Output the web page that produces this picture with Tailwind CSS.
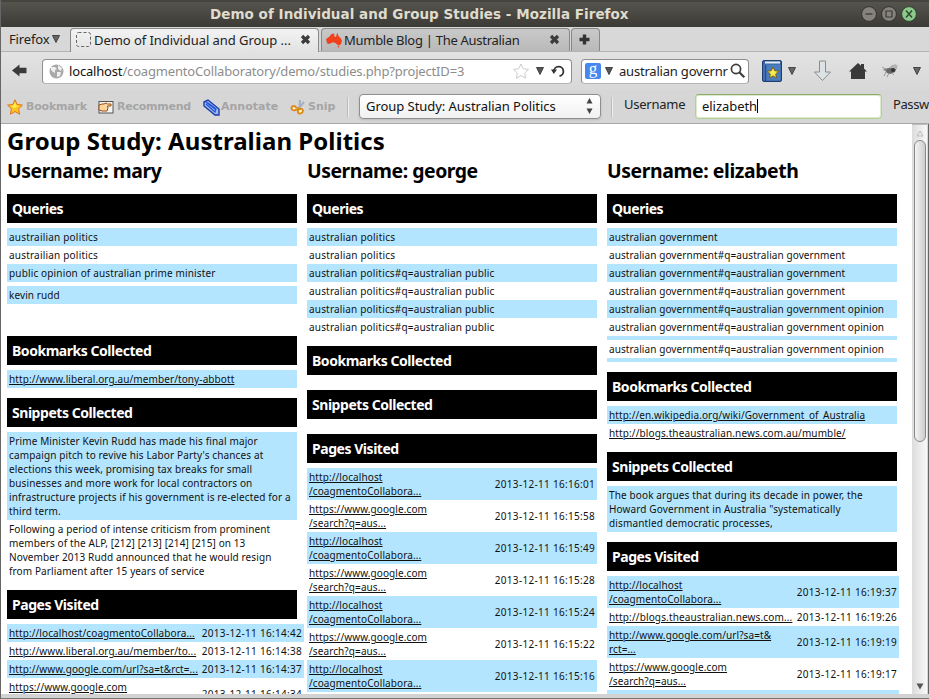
<!DOCTYPE html>
<html lang="en">
<head>
<meta charset="utf-8">
<title>Demo of Individual and Group Studies</title>
<script src="https://cdn.jsdelivr.net/npm/@tailwindcss/browser@4"></script>
</head>
<body class="w-[929px] h-[699px] overflow-hidden bg-[#d6d6d6] font-['Noto_Sans',sans-serif] text-[13px] leading-[18px] text-[#222]">
<div class="w-full h-full flex flex-col overflow-hidden border-l border-[#666]">

  <!-- Title bar -->
  <header class="h-[27px] shrink-0 flex items-center bg-linear-to-b from-[#55544d] to-[#3b3a36] pl-[209px] pr-[12px] pb-px border-t-2 border-[#45443f]">
    <h1 class="w-[420px] font-['DejaVu_Sans',sans-serif] font-bold text-[13.5px] leading-[18px] tracking-[0.04px] text-[#dfdbcd] whitespace-nowrap">Demo of Individual and Group Studies - Mozilla Firefox</h1>
    <div class="ml-auto flex gap-[4px]">
      <svg width="16" height="16" viewBox="0 0 16 16"><circle cx="8" cy="8" r="7.4" fill="#85837b" stroke="#33322e"/><path d="M4.500 8h7" stroke="#3b3a36" stroke-width="1.300"/></svg>
      <svg width="16" height="16" viewBox="0 0 16 16"><circle cx="8" cy="8" r="7.4" fill="#85837b" stroke="#33322e"/><path d="M5 5h6v6H5z" fill="none" stroke="#3b3a36" stroke-width="1.200"/></svg>
      <svg width="16" height="16" viewBox="0 0 16 16"><circle cx="8" cy="8" r="7.4" fill="#8cc98c" stroke="#33422e"/><path d="M5 4.500l6 7M11 4.500l-6 7" stroke="#2d4a2d" stroke-width="1.400"/></svg>
    </div>
  </header>

  <!-- Tabs -->
  <nav class="h-[25px] shrink-0 flex items-end bg-[#d8d8d8] border-b border-[#b4b4b4]">
    <div class="w-[69px] h-[24px] pl-[8px] flex items-center gap-[3px] tracking-[-0.15px]">Firefox
      <svg width="8" height="8" viewBox="0 0 8 8"><path d="M.5 .5h7L4 7.500z" fill="#666" stroke="#444"/></svg>
    </div>
    <div class="w-[249px] h-[24px] -mb-px shrink-0 flex items-center rounded-t-[4px] border border-b-0 border-[#888] bg-linear-to-b from-[#f3f3f3] to-[#e2e2e2] pl-[5px] pb-[2px] relative">
      <svg width="15" height="15" viewBox="0 0 15 15"><rect x=".5" y=".5" width="14" height="14" rx="2" fill="none" stroke="#666" stroke-dasharray="3 2"/></svg>
      <span class="ml-[3px] w-[207px] whitespace-nowrap tracking-[-0.06px]">Demo of Individual and Group ...</span>
      <svg class="-ml-[1px] shrink-0" width="11" height="11" viewBox="0 0 11 11"><path d="M2 2l7 7M9 2L2 9" stroke="#3c3c3c" stroke-width="3.200"/></svg>
    </div>
    <div class="ml-[2px] w-[249px] h-[23px] shrink-0 flex items-center rounded-t-[4px] border border-b-0 border-[#888] bg-linear-to-b from-[#c9c9c9] to-[#b9b9b9] pl-[4px] pb-px">
      <svg width="16" height="16" viewBox="0 0 16 16"><path d="M0 7L3 5 5 2.500 7 1.500 8.500 2 8 4l2 1 1.200-4.500L12.500 4 15 6.500 16 9l-1 3-2 1.500-2-1L9.500 11l-2.500-.7-4 1.700-1.800-.5z" fill="#f0401c"/><path d="M11.500 14h2l-1 2z" fill="#f0492a"/></svg>
      <span class="ml-[2px] w-[205px] whitespace-nowrap tracking-[-0.28px]">Mumble Blog | The Australian</span>
      <svg class="shrink-0" width="11" height="11" viewBox="0 0 11 11"><path d="M2 2l7 7M9 2L2 9" stroke="#3c3c3c" stroke-width="3.200"/></svg>
    </div>
    <div class="ml-[1px] w-[29px] h-[23px] shrink-0 flex items-center justify-center rounded-t-[4px] border border-b-0 border-[#888] bg-linear-to-b from-[#c9c9c9] to-[#b9b9b9] pb-px pr-[2px]">
      <svg width="11" height="11" viewBox="0 0 11 11"><path d="M5.500 .5v10M.5 5.500h10" stroke="#333" stroke-width="3.400"/></svg>
    </div>
  </nav>

  <!-- Navigation -->
  <div class="h-[38px] shrink-0 flex items-center bg-linear-to-b from-[#e2e2e2] to-[#d8d8d8]">
    <svg class="ml-[11px] -mt-[2px] shrink-0" width="15" height="13" viewBox="0 0 15 13"><path d="M0 6.500L7.500 .5v3.200H14.500v5.600H7.500v3.200z" fill="#3a3a3a"/></svg>
    <div class="ml-[15px] w-[530px] h-[25px] shrink-0 flex items-center rounded-[4px] border border-[#8f8f8f] border-b-[#b5b5b5] bg-white pl-[6px]">
      <svg class="shrink-0" width="15" height="15" viewBox="0 0 15 15"><circle cx="7.500" cy="7.500" r="7" fill="#a9a9a9"/><path d="M2 3l4 0 2 2-2 1 0 3-2-1-2-2zM9 1l4 3-1 3-3-2zM8 8l4 0-1 4-3 1z" fill="#f0f0f0"/></svg>
      <span class="ml-[5px] w-[443px] whitespace-nowrap tracking-[-0.17px] text-[#8d8d8d]"><span class="text-[#111]">localhost</span>/coagmentoCollaboratory/demo/studies.php?projectID=3</span>
      <svg class="shrink-0" width="18" height="16" viewBox="0 0 18 16"><path d="M9 1l2.300 4.800 5.200.6-3.800 3.600 1 5.200L9 12.600l-4.700 2.600 1-5.200L1.500 6.400l5.200-.6z" fill="#fff" stroke="#ccc"/></svg>
      <svg class="ml-[6px] shrink-0" width="8" height="8" viewBox="0 0 8 8"><path d="M.5 .5h7L4 7.500z" fill="#555" stroke="#444"/></svg>
      <svg class="ml-[7px] shrink-0" width="14" height="13" viewBox="0 0 14 13"><path d="M3 6.500A4.700 4.700 0 1 1 8.500 11" fill="none" stroke="#333" stroke-width="1.800"/><path d="M0 4.500l6 0-3.200 4.500z" fill="#333"/></svg>
    </div>
    <div class="ml-[9px] w-[168px] h-[25px] shrink-0 flex items-center rounded-[4px] border border-[#8f8f8f] border-b-[#b5b5b5] bg-white pl-[3px]">
      <span class="w-[16px] h-[16px] shrink-0 rounded-[2px] bg-[#4787f0] text-white text-center font-['Liberation_Serif',serif] text-[17px] leading-[12px]">g</span>
      <svg class="ml-[4px] shrink-0" width="8" height="8" viewBox="0 0 8 8"><path d="M.5 .5h7L4 7.500z" fill="#555" stroke="#444"/></svg>
      <span class="ml-[6px] w-[111px] shrink-0 whitespace-nowrap tracking-[-0.2px]">australian governr</span>
      <svg class="shrink-0" width="16" height="16" viewBox="0 0 16 16"><circle cx="6" cy="6" r="4.600" fill="#fff" stroke="#3c3c3c" stroke-width="1.700"/><path d="M9.300 9.300l5 5" stroke="#3c3c3c" stroke-width="2.200"/></svg>
    </div>
    <svg class="ml-[13px] shrink-0" width="20" height="22" viewBox="0 0 20 22"><rect x=".5" y=".5" width="19" height="21" rx="1.500" fill="#3465a4" stroke="#1f3f73"/><path d="M3 1.500h15v2H3z" fill="#e8edf3"/><path d="M1.500 4.500h17v16h-17z" fill="#4b7dbd"/><path d="M3.500 5v16" stroke="#274e88" stroke-width="1.500"/><path d="M11 7l1.700 3.700 4 .5-3 2.700.8 4-3.500-2-3.500 2 .8-4-3-2.700 4-.5z" fill="#fce84f" stroke="#6d5c10" stroke-width=".9"/></svg>
    <svg class="ml-[6px] shrink-0" width="8" height="8" viewBox="0 0 8 8"><path d="M.5 .5h7L4 7.500z" fill="#666" stroke="#444"/></svg>
    <svg class="ml-[17px] shrink-0" width="19" height="22" viewBox="0 0 19 22"><path d="M6.500 1h6v11h5L9.500 20.500 1.500 12h5z" fill="#dde2e4" stroke="#888d8f"/></svg>
    <svg class="ml-[17px] -mt-px shrink-0" width="18" height="17" viewBox="0 0 18 17"><path d="M0 9.500L9 1l3 2.800V2h3v4.500l3 3h-2V17H2V9.500z" fill="#3a3a3a"/></svg>
    <svg class="ml-[15px] shrink-0" width="17" height="16" viewBox="0 0 17 16"><path d="M2 6l5-1 4-3 4 2-2 5-5 2-3-1z" fill="#686868"/><path d="M7 5l6-4 3 2-2 3z" fill="#b5b5b5"/><circle cx="11" cy="7" r="2" fill="#333"/><path d="M5 7L0 4M4 9L2 13M7 10l-2 4M10 10l2 2M1 7h4" stroke="#888" stroke-width=".8"/></svg>
    <svg class="ml-[14px] shrink-0" width="8" height="8" viewBox="0 0 8 8"><path d="M.5 .5h7L4 7.500z" fill="#666" stroke="#444"/></svg>
  </div>

  <!-- Coagmento toolbar -->
  <div class="h-[34px] shrink-0 flex items-center bg-[#d6d6d6] border-b border-[#a8a8a8]">
    <div class="w-[346px] shrink-0 pl-[6px] pt-px flex items-center font-['DejaVu_Sans',sans-serif] font-bold text-[11px] leading-[14px] text-[#a5a5a5]">
      <svg class="shrink-0" width="16" height="16" viewBox="0 0 16 16"><path d="M8 .8l2.200 4.700 5.200.6-3.800 3.600 1 5.500L8 12.500l-4.600 2.700 1-5.500L.6 6.100l5.200-.6z" fill="#fdc324" stroke="#e0711c"/><path d="M8 3l1.300 3.500 3 .5L7 9 3.500 7l3-.5z" fill="#fff04a"/></svg>
      <span class="ml-[3px] w-[72px] tracking-[-0.2px]">Bookmark</span>
      <svg class="shrink-0" width="16" height="13" viewBox="0 0 16 13"><rect x="1" y=".5" width="14" height="11.500" fill="#f5f5f5" stroke="#555"/><path d="M1 4l3-1h2l2-1 1.500 1H13v2H9.500L10 7 9 10H4L1 9z" fill="#ffd5a0" stroke="#9a4d10"/></svg>
      <span class="ml-[3px] w-[84px] tracking-[-0.25px]">Recommend</span>
      <svg class="ml-[2px] shrink-0" width="17" height="17" viewBox="0 0 17 17"><path d="M1 3l4-2 11 9v6h-4L1 7z" fill="#9fb8ee" stroke="#1c3ba8" stroke-width="1.400"/><path d="M3 5l9 8 1-3-8-6M3 3l9 7" fill="none" stroke="#1f51d6" stroke-width="1.200"/></svg>
      <span class="ml-[1px] w-[69px]">Annotate</span>
      <svg class="shrink-0" width="16" height="16" viewBox="0 0 16 16"><path d="M10 1l-.5 8M14 3L8 10" stroke="#a7adc4" stroke-width="2"/><path d="M1.500 8.500c1-2 3.500-2 4.500 0l4 1.500-5 1C3.500 12 1 10.500 1.500 8.500zM8 11.500c0-2 4.500-3 5 0 0 3-4 4-5 2z" fill="#fff1c9" stroke="#dc8915" stroke-width="1.800"/></svg>
      <span class="ml-[2px]">Snip</span>
    </div>
    <div class="w-[2px] h-[20px] border-l border-[#bbb] bg-[#eee]"></div>
    <div class="ml-[10px] w-[242px] h-[25px] shrink-0 flex items-center rounded-[4px] border border-[#8f8f8f] bg-linear-to-b from-white to-[#f1f1f1] pl-[6px] pb-px text-[#111] shadow-sm">
      <span class="w-[220px] whitespace-nowrap tracking-[-0.05px]">Group Study: Australian Politics</span>
      <svg class="shrink-0" width="7" height="16" viewBox="0 0 7 16"><path d="M.5 5.500L3.500 0l3 5.500zM.5 10.500h6L3.500 16z" fill="#444"/></svg>
    </div>
    <div class="ml-[10px] w-[2px] h-[20px] border-l border-[#bbb] bg-[#eee]"></div>
    <span class="ml-[11px] w-[71px] shrink-0 -mt-[5px] tracking-[-0.25px]">Username</span>
    <div class="w-[187px] h-[25px] shrink-0 flex items-center rounded-[4px] border border-[#b5cf98] border-t-[#8cab68] bg-white pl-[6px] pb-px text-[#111] shadow-[inset_0_0_0_1px_#dcebcb]"><span class="tracking-[-0.05px]">elizabeth</span><i class="w-px h-[14px] bg-black"></i></div>
    <span class="ml-[11px] w-[35px] shrink-0 -mt-[5px] whitespace-nowrap tracking-[-0.4px]">Passw</span>
  </div>

  <!-- Page -->
  <div class="h-[570px] shrink-0 flex overflow-hidden">
    <main class="w-[911px] shrink-0 bg-white pl-[6px] text-black overflow-hidden">
      <h2 class="h-[32px] font-bold text-[24px] leading-[33px] tracking-[0.03px]">Group Study: Australian Politics</h2>
      <div class="flex gap-[10px] text-[10px] leading-[14px] tracking-[0.1px] text-[#111]">

        <section class="w-[290px] shrink-0">
          <h3 class="h-[38px] pt-[3px] font-bold text-[19.4px] leading-[24px] tracking-[-0.4px] text-black">Username: mary</h3>
          <h4 class="h-[29px] pl-[5px] bg-black text-white font-bold text-[14px] leading-[29px] tracking-[-0.46px]">Queries</h4>
          <div class="mt-[5px] bg-[#b3e5ff] p-[2px] tracking-[0.2px]">austrailian politics</div>
          <div class="p-[2px] tracking-[0.2px]">austrailian politics</div>
          <div class="bg-[#b3e5ff] p-[2px] tracking-[0.15px]">public opinion of australian prime minister</div>
          <div class="mt-[4px] bg-[#b3e5ff] p-[2px]">kevin rudd</div>
          <h4 class="mt-[32px] h-[29px] pl-[5px] bg-black text-white font-bold text-[14px] leading-[29px] tracking-[-0.46px]">Bookmarks Collected</h4>
          <div class="mt-[5px] bg-[#b3e5ff] p-[2px]"><a class="underline">http://www.liberal.org.au/member/tony-abbott</a></div>
          <h4 class="mt-[10px] h-[29px] pl-[5px] bg-black text-white font-bold text-[14px] leading-[29px] tracking-[-0.46px]">Snippets Collected</h4>
          <div class="mt-[5px] bg-[#b3e5ff] p-[2px] whitespace-nowrap tracking-[0.13px]">Prime Minister Kevin Rudd has made his final major<br>campaign pitch to revive his Labor Party's chances at<br>elections this week, promising tax breaks for small<br>businesses and more work for local contractors on<br>infrastructure projects if his government is re-elected for a<br>third term.</div>
          <div class="p-[2px] whitespace-nowrap tracking-[0.11px]">Following a period of intense criticism from prominent<br>members of the ALP, [212] [213] [214] [215] on 13<br>November 2013 Rudd announced that he would resign<br>from Parliament after 15 years of service</div>
          <h4 class="mt-[10px] h-[29px] pl-[5px] bg-black text-white font-bold text-[14px] leading-[29px] tracking-[-0.46px]">Pages Visited</h4>
          <div class="mt-[5px] w-[297px] whitespace-nowrap">
            <div class="flex items-center justify-between bg-[#b3e5ff] p-[2px]"><a class="underline">http://localhost/coagmentoCollabora...</a><span class="tracking-[0.3px]">2013-12-11 16:14:42</span></div>
            <div class="flex items-center justify-between p-[2px]"><a class="underline">http://www.liberal.org.au/member/to...</a><span class="tracking-[0.3px]">2013-12-11 16:14:38</span></div>
            <div class="flex items-center justify-between bg-[#b3e5ff] p-[2px]"><a class="underline">http://www.google.com/url?sa=t&amp;rct=...</a><span class="tracking-[0.3px]">2013-12-11 16:14:37</span></div>
            <div class="flex items-center justify-between p-[2px]"><a class="underline">https://www.google.com<br>/search?q=aus...</a><span class="tracking-[0.3px]">2013-12-11 16:14:34</span></div>
          </div>
        </section>

        <section class="w-[290px] shrink-0">
          <h3 class="h-[38px] pt-[3px] font-bold text-[19.4px] leading-[24px] tracking-[-0.46px] text-black">Username: george</h3>
          <h4 class="h-[29px] pl-[5px] bg-black text-white font-bold text-[14px] leading-[29px] tracking-[-0.46px]">Queries</h4>
          <div class="mt-[5px] bg-[#b3e5ff] p-[2px] tracking-[0.2px]">australian politics</div>
          <div class="p-[2px] tracking-[0.2px]">australian politics</div>
          <div class="bg-[#b3e5ff] p-[2px] tracking-[0.18px]">australian politics#q=australian public</div>
          <div class="p-[2px] tracking-[0.18px]">australian politics#q=australian public</div>
          <div class="bg-[#b3e5ff] p-[2px] tracking-[0.18px]">australian politics#q=australian public</div>
          <div class="p-[2px] tracking-[0.18px]">australian politics#q=australian public</div>
          <h4 class="mt-[10px] h-[29px] pl-[5px] bg-black text-white font-bold text-[14px] leading-[29px] tracking-[-0.46px]">Bookmarks Collected</h4>
          <h4 class="mt-[15px] h-[29px] pl-[5px] bg-black text-white font-bold text-[14px] leading-[29px] tracking-[-0.46px]">Snippets Collected</h4>
          <h4 class="mt-[15px] h-[29px] pl-[5px] bg-black text-white font-bold text-[14px] leading-[29px] tracking-[-0.46px]">Pages Visited</h4>
          <div class="mt-[5px] whitespace-nowrap">
            <div class="flex items-center justify-between bg-[#b3e5ff] p-[2px]"><a class="underline">http://localhost<br>/coagmentoCollabora...</a><span class="tracking-[0.3px]">2013-12-11 16:16:01</span></div>
            <div class="flex items-center justify-between p-[2px]"><a class="underline">https://www.google.com<br>/search?q=aus...</a><span class="tracking-[0.3px]">2013-12-11 16:15:58</span></div>
            <div class="flex items-center justify-between bg-[#b3e5ff] p-[2px]"><a class="underline">http://localhost<br>/coagmentoCollabora...</a><span class="tracking-[0.3px]">2013-12-11 16:15:49</span></div>
            <div class="flex items-center justify-between p-[2px]"><a class="underline">https://www.google.com<br>/search?q=aus...</a><span class="tracking-[0.3px]">2013-12-11 16:15:28</span></div>
            <div class="flex items-center justify-between bg-[#b3e5ff] p-[2px]"><a class="underline">http://localhost<br>/coagmentoCollabora...</a><span class="tracking-[0.3px]">2013-12-11 16:15:24</span></div>
            <div class="flex items-center justify-between p-[2px]"><a class="underline">https://www.google.com<br>/search?q=aus...</a><span class="tracking-[0.3px]">2013-12-11 16:15:22</span></div>
            <div class="flex items-center justify-between bg-[#b3e5ff] p-[2px]"><a class="underline">http://localhost<br>/coagmentoCollabora...</a><span class="tracking-[0.3px]">2013-12-11 16:15:16</span></div>
          </div>
        </section>

        <section class="w-[290px] shrink-0">
          <h3 class="h-[38px] pt-[3px] font-bold text-[19.4px] leading-[24px] tracking-[-0.4px] text-black">Username: elizabeth</h3>
          <h4 class="h-[29px] pl-[5px] bg-black text-white font-bold text-[14px] leading-[29px] tracking-[-0.46px]">Queries</h4>
          <div class="mt-[5px] bg-[#b3e5ff] p-[2px] tracking-[0.08px]">australian government</div>
          <div class="p-[2px] tracking-[0.08px]">australian government#q=australian government</div>
          <div class="bg-[#b3e5ff] p-[2px] tracking-[0.08px]">australian government#q=australian government</div>
          <div class="p-[2px] tracking-[0.08px]">australian government#q=australian government</div>
          <div class="bg-[#b3e5ff] p-[2px] tracking-[0.08px]">australian government#q=australian government opinion</div>
          <div class="p-[2px] tracking-[0.08px]">australian government#q=australian government opinion</div>
          <div class="border-y-4 border-[#b3e5ff] p-[2px] tracking-[0.08px]">australian government#q=australian government opinion</div>
          <h4 class="mt-[10px] h-[29px] pl-[5px] bg-black text-white font-bold text-[14px] leading-[29px] tracking-[-0.46px]">Bookmarks Collected</h4>
          <div class="mt-[5px] bg-[#b3e5ff] p-[2px] tracking-[0.08px]"><a class="underline">http://en.wikipedia.org/wiki/Government_of_Australia</a></div>
          <div class="p-[2px] tracking-[0.12px]"><a class="underline">http://blogs.theaustralian.news.com.au/mumble/</a></div>
          <h4 class="mt-[10px] h-[29px] pl-[5px] bg-black text-white font-bold text-[14px] leading-[29px] tracking-[-0.46px]">Snippets Collected</h4>
          <div class="mt-[5px] bg-[#b3e5ff] p-[2px] whitespace-nowrap tracking-[0.13px]">The book argues that during its decade in power, the<br>Howard Government in Australia "systematically<br>dismantled democratic processes,</div>
          <h4 class="mt-[10px] h-[29px] pl-[5px] bg-black text-white font-bold text-[14px] leading-[29px] tracking-[-0.46px]">Pages Visited</h4>
          <div class="mt-[5px] w-[292px] whitespace-nowrap">
            <div class="flex items-center justify-between bg-[#b3e5ff] p-[2px]"><a class="underline">http://localhost<br>/coagmentoCollabora...</a><span class="tracking-[0.3px]">2013-12-11 16:19:37</span></div>
            <div class="flex items-center justify-between p-[2px]"><a class="underline tracking-[0.14px]">http://blogs.theaustralian.news.com...</a><span class="tracking-[0.3px]">2013-12-11 16:19:26</span></div>
            <div class="flex items-center justify-between bg-[#b3e5ff] p-[2px]"><a class="underline">http://www.google.com/url?sa=t&amp;<br>rct=...</a><span class="tracking-[0.3px]">2013-12-11 16:19:19</span></div>
            <div class="flex items-center justify-between p-[2px]"><a class="underline">https://www.google.com<br>/search?q=aus...</a><span class="tracking-[0.3px]">2013-12-11 16:19:17</span></div>
            <div class="h-[32px] bg-[#b3e5ff]"></div>
          </div>
        </section>
      </div>
    </main>
    <!-- Scrollbar -->
    <div class="w-[15px] shrink-0 flex flex-col items-center bg-linear-to-r from-[#dcdcdc] to-[#f8f8f8] border-t border-[#bbb]">
      <svg class="mt-[5px] shrink-0" width="8" height="7" viewBox="0 0 8 7"><path d="M1 6L4 1l3 5z" fill="none" stroke="#bbb"/></svg>
      <div class="mt-[3px] w-[12px] h-[302px] shrink-0 rounded-full border border-[#888] bg-linear-to-r from-[#f4f4f4] to-[#cdcdcd]"></div>
      <svg class="mt-auto mb-[4px] shrink-0" width="8" height="7" viewBox="0 0 8 7"><path d="M.5 .5h7L4 6.500z" fill="#555"/></svg>
    </div>
    <div class="grow border-r border-[#666] bg-[#d6d6d6]"></div>
  </div>
  <footer class="grow bg-[#d2d2d2] border-b border-[#777]"></footer>
</div>
</body>
</html>
